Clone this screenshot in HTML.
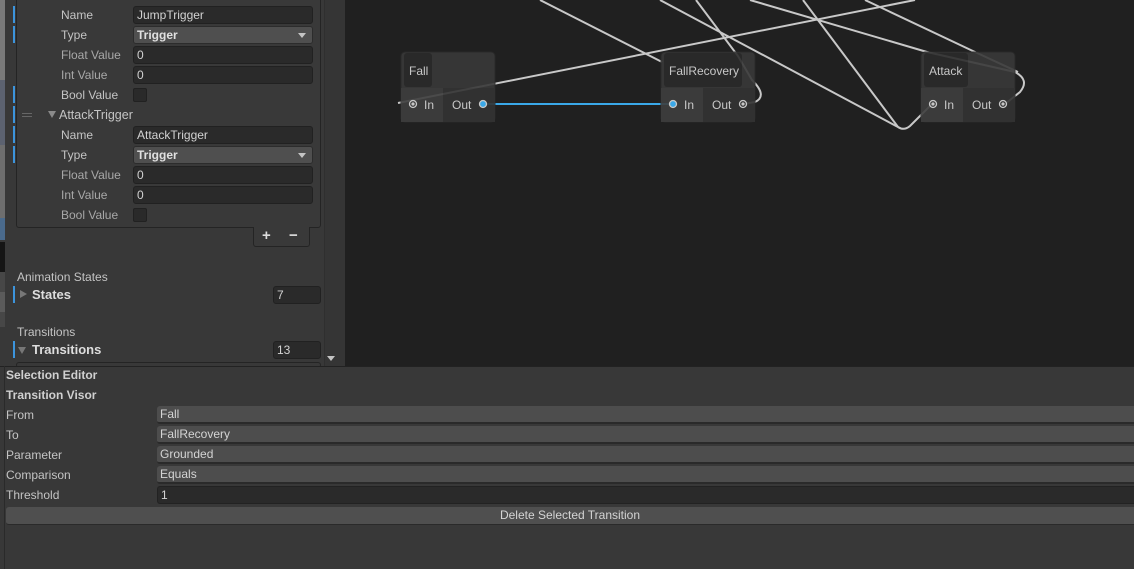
<!DOCTYPE html>
<html><head><style>
*{margin:0;padding:0;box-sizing:border-box}
body{width:1134px;height:569px;overflow:hidden;background:#383838;font-family:"Liberation Sans",sans-serif;font-size:12px;color:#c4c4c4;position:relative}
.a{position:absolute}
.lbl{position:absolute;left:61px;height:18px;line-height:18px}
.fld{position:absolute;left:133px;width:180px;height:18px;background:#2a2a2a;border:1px solid #212121;border-radius:3px;padding-left:3px;line-height:16px;color:#d2d2d2}
.dd{background:#4f4f4f;border-color:#2c2c2c;font-weight:bold;color:#e0e0e0}
.dd:after{content:"";position:absolute;right:6px;top:6px;border-left:4px solid transparent;border-right:4px solid transparent;border-top:5px solid #c4c4c4}
.cb{position:absolute;left:133px;width:14px;height:14px;background:#2a2a2a;border:1px solid #212121;border-radius:2px}
.bar{position:absolute;left:13px;width:2px;height:17px;background:#3c94dc}
.blbl{position:absolute;left:6px;height:18px;line-height:18px}
.bf{position:absolute;left:157px;right:0;height:18px;background:#4d4d4d;border-bottom:2px solid #2a2a2a;border-radius:3px 0 0 3px;padding-left:3px;line-height:17px;color:#d4d4d4}
</style></head><body>
<!-- left strip scene -->
<div class="a" style="left:0;top:0;width:5px;height:80px;background:#7a7a7a"></div>
<div class="a" style="left:0;top:80px;width:5px;height:65px;background:#5c6270"></div>
<div class="a" style="left:0;top:145px;width:5px;height:73px;background:#6e6e6e"></div>
<div class="a" style="left:0;top:218px;width:5px;height:22px;background:#4a6a8c"></div>
<div class="a" style="left:0;top:242px;width:5px;height:30px;background:#151515"></div>
<div class="a" style="left:0;top:272px;width:5px;height:55px;background:#474747"></div>
<div class="a" style="left:0;top:292px;width:5px;height:20px;background:#5b5b5b"></div>
<!-- inspector box -->
<div class="a" style="left:16px;top:-5px;width:305px;height:233px;border:1px solid #242424;border-radius:3px;background:#393939"></div>
<div class="a" style="left:253px;top:227px;width:57px;height:20px;border:1px solid #242424;border-top:none;border-radius:0 0 3px 3px;background:#393939"></div>
<div class="a" style="left:262px;top:227px;font-size:15px;font-weight:bold;color:#ddd">+</div>
<div class="a" style="left:289px;top:227px;font-size:15px;font-weight:bold;color:#ddd">−</div>
<div class="bar" style="top:6px"></div><div class="bar" style="top:26px"></div>
<div class="bar" style="top:86px"></div><div class="bar" style="top:106px"></div><div class="bar" style="top:126px"></div><div class="bar" style="top:146px"></div>
<div class="lbl" style="top:6px">Name</div><div class="fld" style="top:6px">JumpTrigger</div>
<div class="lbl" style="top:26px">Type</div><div class="fld dd" style="top:26px">Trigger</div>
<div class="lbl" style="top:46px;color:#a8a8a8">Float Value</div><div class="fld" style="top:46px">0</div>
<div class="lbl" style="top:66px;color:#a8a8a8">Int Value</div><div class="fld" style="top:66px">0</div>
<div class="lbl" style="top:86px">Bool Value</div><div class="cb" style="top:88px"></div>
<div class="a" style="left:22px;top:113px;width:10px;height:4px;border-top:1px solid #666;border-bottom:1px solid #666"></div>
<div class="a" style="left:48px;top:111px;border-left:4px solid transparent;border-right:4px solid transparent;border-top:7px solid #8a8a8a"></div>
<div class="lbl" style="top:106px;left:59px;font-size:12.5px">AttackTrigger</div>
<div class="lbl" style="top:126px">Name</div><div class="fld" style="top:126px">AttackTrigger</div>
<div class="lbl" style="top:146px">Type</div><div class="fld dd" style="top:146px">Trigger</div>
<div class="lbl" style="top:166px;color:#a8a8a8">Float Value</div><div class="fld" style="top:166px">0</div>
<div class="lbl" style="top:186px;color:#a8a8a8">Int Value</div><div class="fld" style="top:186px">0</div>
<div class="lbl" style="top:206px;color:#a8a8a8">Bool Value</div><div class="cb" style="top:208px"></div>
<div class="a" style="left:17px;top:269px;line-height:16px">Animation States</div>
<div class="bar" style="top:286px"></div>
<div class="a" style="left:20px;top:290px;border-top:4px solid transparent;border-bottom:4px solid transparent;border-left:7px solid #777"></div>
<div class="a" style="left:32px;top:287px;font-weight:bold;font-size:13px;color:#ddd">States</div>
<div class="fld" style="left:273px;width:48px;top:286px">7</div>
<div class="a" style="left:17px;top:324px;line-height:16px">Transitions</div>
<div class="bar" style="top:341px"></div>
<div class="a" style="left:18px;top:347px;border-left:4px solid transparent;border-right:4px solid transparent;border-top:7px solid #777"></div>
<div class="a" style="left:32px;top:342px;font-weight:bold;font-size:13px;color:#ddd">Transitions</div>
<div class="fld" style="left:273px;width:48px;top:341px">13</div>
<div class="a" style="left:16px;top:362px;width:305px;height:6px;border:1px solid #242424;border-radius:3px"></div>
<!-- scrollbar -->
<div class="a" style="left:324px;top:0;width:21px;height:366px;background:#353535;border-left:1px solid #2f2f2f"></div>
<div class="a" style="left:327px;top:356px;border-left:4px solid transparent;border-right:4px solid transparent;border-top:5px solid #c4c4c4"></div>
<!-- graph -->
<svg class="a" style="left:345px;top:0" width="789" height="366" viewBox="345 0 789 366">
<rect x="345" y="0" width="789" height="366" fill="#202020"/>
<g fill="none" stroke="#c8c8c8" stroke-width="2">
<path d="M398 103 L915 0"/>
<path d="M540 0 L662 62"/>
<path d="M660 0 L898 127 Q904 131 910 126 L932 104"/>
<path d="M696 0 L738 56 L752 80 Q768 96 755 102 L743 104"/>
<path d="M803 0 L898 127"/>
<path d="M750 0 L927 52 L1015 72 Q1030 80 1020 92 L1005 104"/>
<path d="M865 0 L975 52 L1018 72"/>
</g>
<line x1="485" y1="104" x2="670" y2="104" stroke="#3aa8e8" stroke-width="2"/>
<g font-family="Liberation Sans, sans-serif" font-size="12" fill="#c8c8c8">
<g opacity="0.9">
<rect x="401" y="52" width="94" height="70" rx="4" fill="#393939" stroke="#2a2a2a"/>
<rect x="401" y="88" width="42" height="34" fill="#3e3e3e"/><rect x="443" y="88" width="52" height="34" fill="#333"/>
<rect x="404" y="53" width="28" height="34" rx="3" fill="#2b2b2b"/>
<rect x="661" y="52" width="94" height="70" rx="4" fill="#393939" stroke="#2a2a2a"/>
<rect x="661" y="88" width="42" height="34" fill="#3e3e3e"/><rect x="703" y="88" width="52" height="34" fill="#333"/>
<rect x="664" y="53" width="78" height="34" rx="3" fill="#2b2b2b"/>
<rect x="921" y="52" width="94" height="70" rx="4" fill="#393939" stroke="#2a2a2a"/>
<rect x="921" y="88" width="42" height="34" fill="#3e3e3e"/><rect x="963" y="88" width="52" height="34" fill="#333"/>
<rect x="924" y="53" width="44" height="34" rx="3" fill="#2b2b2b"/>
</g>
<text x="409" y="75">Fall</text><text x="669" y="75">FallRecovery</text><text x="929" y="75">Attack</text>
<text x="424" y="109">In</text><text x="452" y="109">Out</text>
<text x="684" y="109">In</text><text x="712" y="109">Out</text>
<text x="944" y="109">In</text><text x="972" y="109">Out</text>
<g fill="none" stroke="#c8c8c8" stroke-width="1.3"><circle cx="413" cy="104" r="3.5"/><circle cx="743" cy="104" r="3.5"/><circle cx="933" cy="104" r="3.5"/><circle cx="1003" cy="104" r="3.5"/></g>
<g fill="#c8c8c8"><circle cx="413" cy="104" r="1.6"/><circle cx="743" cy="104" r="1.6"/><circle cx="933" cy="104" r="1.6"/><circle cx="1003" cy="104" r="1.6"/></g>
<circle cx="483" cy="104" r="3.5" fill="#3aa8e8" stroke="#c8c8c8" stroke-width="1.3"/>
<circle cx="673" cy="104" r="3.5" fill="#3aa8e8" stroke="#c8c8c8" stroke-width="1.3"/>
</g>
</svg>
<!-- bottom panel -->
<div class="a" style="left:0;top:366px;width:1134px;height:203px;background:#383838;border-top:1px solid #222"></div>
<div class="a" style="left:4px;top:366px;width:1px;height:203px;background:#2a2a2a"></div>
<div class="blbl" style="top:366px;font-weight:bold;color:#d0d0d0">Selection Editor</div>
<div class="blbl" style="top:386px;font-weight:bold;color:#d0d0d0">Transition Visor</div>
<div class="blbl" style="top:406px">From</div><div class="bf" style="top:406px">Fall</div>
<div class="blbl" style="top:426px">To</div><div class="bf" style="top:426px">FallRecovery</div>
<div class="blbl" style="top:446px">Parameter</div><div class="bf" style="top:446px">Grounded</div>
<div class="blbl" style="top:466px">Comparison</div><div class="bf" style="top:466px">Equals</div>
<div class="blbl" style="top:486px">Threshold</div><div class="bf" style="top:486px;background:#2a2a2a;border:1px solid #222;border-right:none">1</div>
<div class="a" style="left:6px;top:507px;right:0;height:18px;background:#4f4f4f;border-bottom:1px solid #2a2a2a;border-radius:3px 0 0 3px;text-align:center;line-height:17px;color:#d4d4d4">Delete Selected Transition</div>
</body></html>
